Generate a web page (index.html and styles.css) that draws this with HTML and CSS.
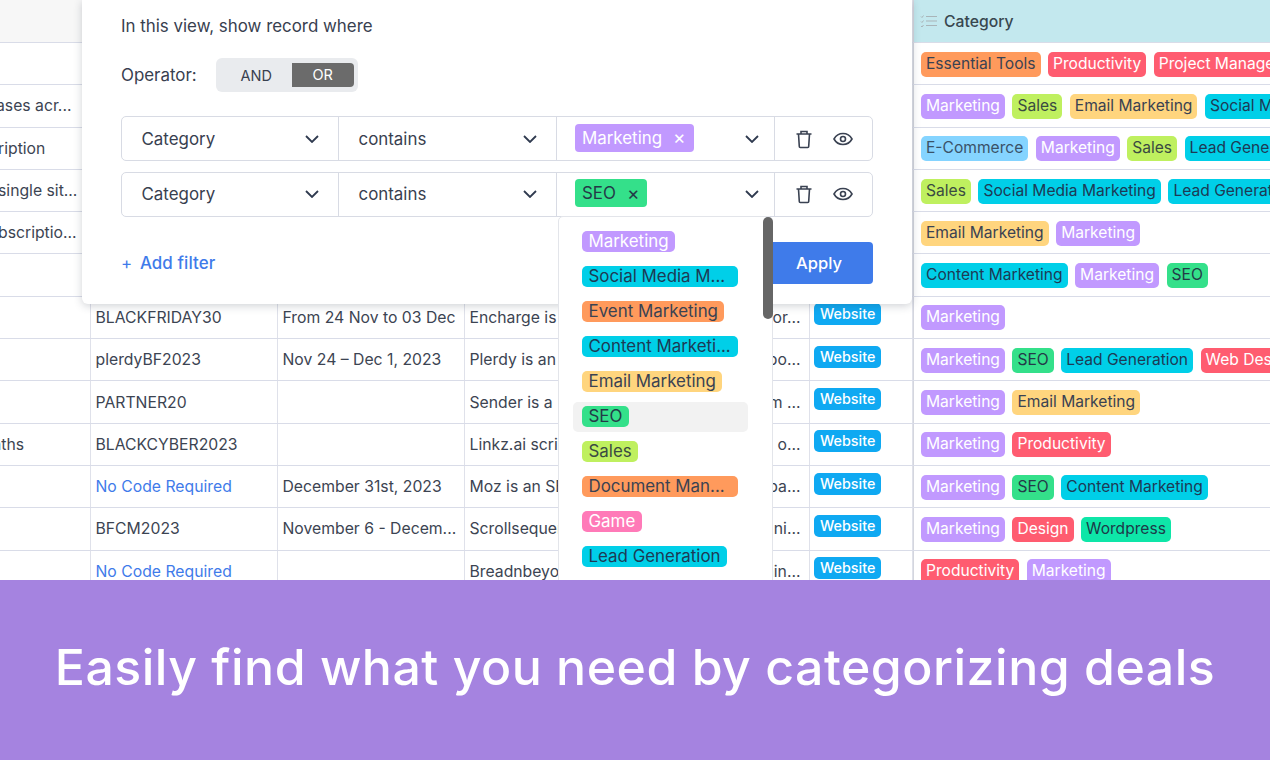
FILE: index.html
```html
<!DOCTYPE html>
<html lang="en">
<head>
    <meta charset="UTF-8">
    <title>Deals</title>
    <link rel="stylesheet" href="styles.css">
</head>
<body>
    <div class="screen">
        <div class="table">
            <div class="row head">
                <div class="cell"></div><div class="cell"></div><div class="cell"></div><div class="cell"></div><div class="cell"></div>
                <div class="cell cat-head">
                    <svg class="list-icon" viewBox="0 0 18 14" width="18" height="14"><path d="M1 2.5l1 1 1.5-2M1 7.5l1 1 1.5-2M1 12l1 1 1.5-2" fill="none" stroke="#a9b4b8" stroke-width="1"/><path d="M6 2.5h11M6 7h11M6 11.5h11" fill="none" stroke="#a9b4b8" stroke-width="1.2"/></svg>
                    Category
                </div>
            </div>
            <div class="row">
                <div class="cell first"></div><div class="cell"></div><div class="cell"></div><div class="cell"></div><div class="cell"></div>
                <div class="cell tags"><span class="tag orange">Essential Tools</span><span class="tag red">Productivity</span><span class="tag red">Project Management</span></div>
            </div>
            <div class="row">
                <div class="cell first shift-sm">ases acr...</div><div class="cell"></div><div class="cell"></div><div class="cell"></div><div class="cell"></div>
                <div class="cell tags"><span class="tag purple">Marketing</span><span class="tag lime">Sales</span><span class="tag yellow">Email Marketing</span><span class="tag cyan">Social Media</span></div>
            </div>
            <div class="row">
                <div class="cell first">ription</div><div class="cell"></div><div class="cell"></div><div class="cell"></div><div class="cell"></div>
                <div class="cell tags"><span class="tag sky">E-Commerce</span><span class="tag purple">Marketing</span><span class="tag lime">Sales</span><span class="tag cyan">Lead Generation</span></div>
            </div>
            <div class="row">
                <div class="cell first">single sit...</div><div class="cell"></div><div class="cell"></div><div class="cell"></div><div class="cell"></div>
                <div class="cell tags"><span class="tag lime">Sales</span><span class="tag cyan">Social Media Marketing</span><span class="tag cyan">Lead Generation</span></div>
            </div>
            <div class="row">
                <div class="cell first">bscriptio...</div><div class="cell"></div><div class="cell"></div><div class="cell"></div><div class="cell"></div>
                <div class="cell tags"><span class="tag yellow">Email Marketing</span><span class="tag purple">Marketing</span></div>
            </div>
            <div class="row">
                <div class="cell first"></div><div class="cell"></div><div class="cell"></div><div class="cell"></div><div class="cell"></div>
                <div class="cell tags"><span class="tag cyan">Content Marketing</span><span class="tag purple">Marketing</span><span class="tag green">SEO</span></div>
            </div>
            <div class="row">
                <div class="cell first"></div><div class="cell">BLACKFRIDAY30</div><div class="cell">From 24 Nov to 03 Dec</div>
                <div class="cell split"><span>Encharge is</span><span>for...</span></div>
                <div class="cell site"><span class="web">Website</span></div>
                <div class="cell tags"><span class="tag purple">Marketing</span></div>
            </div>
            <div class="row">
                <div class="cell first"></div><div class="cell">plerdyBF2023</div><div class="cell">Nov 24 – Dec 1, 2023</div>
                <div class="cell split"><span>Plerdy is an</span><span>bo...</span></div>
                <div class="cell site"><span class="web">Website</span></div>
                <div class="cell tags"><span class="tag purple">Marketing</span><span class="tag green">SEO</span><span class="tag cyan">Lead Generation</span><span class="tag red">Web Design</span></div>
            </div>
            <div class="row">
                <div class="cell first"></div><div class="cell">PARTNER20</div><div class="cell"></div>
                <div class="cell split"><span>Sender is a</span><span>m ...</span></div>
                <div class="cell site"><span class="web">Website</span></div>
                <div class="cell tags"><span class="tag purple">Marketing</span><span class="tag yellow">Email Marketing</span></div>
            </div>
            <div class="row">
                <div class="cell first shift-lg">nths</div><div class="cell">BLACKCYBER2023</div><div class="cell"></div>
                <div class="cell split"><span>Linkz.ai scri</span><span>o...</span></div>
                <div class="cell site"><span class="web">Website</span></div>
                <div class="cell tags"><span class="tag purple">Marketing</span><span class="tag red">Productivity</span></div>
            </div>
            <div class="row">
                <div class="cell first"></div><div class="cell link">No Code Required</div><div class="cell">December 31st, 2023</div>
                <div class="cell split"><span>Moz is an SEO</span><span>pa...</span></div>
                <div class="cell site"><span class="web">Website</span></div>
                <div class="cell tags"><span class="tag purple">Marketing</span><span class="tag green">SEO</span><span class="tag cyan">Content Marketing</span></div>
            </div>
            <div class="row">
                <div class="cell first"></div><div class="cell">BFCM2023</div><div class="cell">November 6 - Decem...</div>
                <div class="cell split"><span>Scrollsequence</span><span>ni...</span></div>
                <div class="cell site"><span class="web">Website</span></div>
                <div class="cell tags"><span class="tag purple">Marketing</span><span class="tag red">Design</span><span class="tag mint">Wordpress</span></div>
            </div>
            <div class="row">
                <div class="cell first"></div><div class="cell link">No Code Required</div><div class="cell"></div>
                <div class="cell split"><span>Breadnbeyond</span><span>ain...</span></div>
                <div class="cell site"><span class="web">Website</span></div>
                <div class="cell tags"><span class="tag red">Productivity</span><span class="tag purple">Marketing</span></div>
            </div>

            <div class="modal">
                <p class="modal-title">In this view, show record where</p>
                <div class="operator">
                    <span>Operator:</span>
                    <div class="switch"><span class="switch-item">AND</span><span class="switch-item on">OR</span></div>
                </div>
                <div class="filter">
                    <div class="fcell">Category<svg class="chev" viewBox="0 0 14 8" width="14" height="8"><path d="M1 1l6 6 6-6"/></svg></div>
                    <div class="fcell">contains<svg class="chev" viewBox="0 0 14 8" width="14" height="8"><path d="M1 1l6 6 6-6"/></svg></div>
                    <div class="fcell value"><span class="chip purple">Marketing<i>×</i></span><svg class="chev" viewBox="0 0 14 8" width="14" height="8"><path d="M1 1l6 6 6-6"/></svg></div>
                    <div class="actions">
                        <svg viewBox="0 0 18 20" width="18" height="20"><path d="M1.5 5h15M6 5V2.5h6V5M3.5 5l.8 12.5a1 1 0 0 0 1 1h7.4a1 1 0 0 0 1-1L14.500 5" class="ico"/></svg>
                        <svg viewBox="0 0 20 14" width="20" height="14"><path d="M1 7c2-3.600 5-5.500 9-5.500S17 3.400 19 7c-2 3.600-5 5.500-9 5.500S3 10.600 1 7z" class="ico"/><circle cx="10" cy="7" r="2.500" class="ico"/></svg>
                    </div>
                </div>
                <div class="filter">
                    <div class="fcell">Category<svg class="chev" viewBox="0 0 14 8" width="14" height="8"><path d="M1 1l6 6 6-6"/></svg></div>
                    <div class="fcell">contains<svg class="chev" viewBox="0 0 14 8" width="14" height="8"><path d="M1 1l6 6 6-6"/></svg></div>
                    <div class="fcell value"><span class="chip green">SEO<i>×</i></span><svg class="chev" viewBox="0 0 14 8" width="14" height="8"><path d="M1 1l6 6 6-6"/></svg></div>
                    <div class="actions">
                        <svg viewBox="0 0 18 20" width="18" height="20"><path d="M1.5 5h15M6 5V2.500h6V5M3.500 5l.8 12.500a1 1 0 0 0 1 1h7.400a1 1 0 0 0 1-1L14.500 5" class="ico"/></svg>
                        <svg viewBox="0 0 20 14" width="20" height="14"><path d="M1 7c2-3.600 5-5.500 9-5.500S17 3.400 19 7c-2 3.600-5 5.500-9 5.500S3 10.600 1 7z" class="ico"/><circle cx="10" cy="7" r="2.500" class="ico"/></svg>
                    </div>
                </div>
                <div class="modal-foot">
                    <span class="add"><b>+</b> Add filter</span>
                    <button class="apply">Apply</button>
                </div>
            </div>

            <div class="dropdown">
                <div class="scroll"></div>
                <div class="opt"><span class="dtag purple">Marketing</span></div>
                <div class="opt"><span class="dtag cyan wide">Social Media M...</span></div>
                <div class="opt"><span class="dtag orange">Event Marketing</span></div>
                <div class="opt"><span class="dtag cyan wide">Content Marketi...</span></div>
                <div class="opt"><span class="dtag yellow">Email Marketing</span></div>
                <div class="opt hover"><span class="dtag green">SEO</span></div>
                <div class="opt"><span class="dtag lime">Sales</span></div>
                <div class="opt"><span class="dtag orange wide">Document Man...</span></div>
                <div class="opt"><span class="dtag pink">Game</span></div>
                <div class="opt"><span class="dtag cyan">Lead Generation</span></div>
            </div>
        </div>
        <div class="banner">Easily find what you need by categorizing deals</div>
    </div>
</body>
</html>
```

FILE: styles.css
```css
* {
    box-sizing: border-box;
}

body {
    margin: 0;
    font-family: Inter, 'Liberation Sans', sans-serif;
    color: #3c4452;
    background-color: #fff;
}

.screen {
    width: 1270px;
    height: 760px;
    overflow: hidden;
}

.table {
    position: relative;
    height: 580px;
    overflow: hidden;
    font-size: 15.75px;
}

.row {
    display: grid;
    grid-template-columns: 90.5px 187px 187px 345px 103.5px 1fr;
    height: 42.3px;
    border-bottom: 1.5px solid #d9dce8;
}

.head {
    height: 43px;
    background-color: #f7f7f7;
}

.cell {
    display: flex;
    align-items: center;
    padding: 0 5px;
    white-space: nowrap;
    overflow: hidden;
    border-right: 1.5px solid #dfe1ea;
}

.cell.first {
    padding: 0;
    text-indent: -2px;
}

.cell.shift-sm {
    text-indent: -4px;
}

.cell.shift-lg {
    text-indent: -8px;
}

.cell:last-child {
    border-right: none;
    border-left: 1px solid #d4d6de;
}

.cat-head {
    gap: 6px;
    padding-left: 6px;
    background-color: #c3e8ee;
    font-weight: 500;
    color: #38474f;
}

.link {
    color: #3f7bea;
}

.split {
    justify-content: space-between;
    padding-right: 8px;
}

.site {
    padding: 0 0 6px 4.5px;
}

.web {
    height: 22px;
    line-height: 21px;
    padding: 0 6px;
    border-radius: 5px;
    font-size: 14.3px;
    font-weight: 500;
    color: #fff;
    background-color: #0fa9f2;
}

.tags {
    gap: 7.5px;
    padding: 1px 0 0 7px;
}

.tag {
    height: 25px;
    line-height: 24px;
    padding: 0 5px;
    border-radius: 5px;
    flex-shrink: 0;
    font-size: 15.6px;
}

.purple { background-color: #c199ff; color: #fff; }
.red { background-color: #ff5c70; color: #fff; }
.pink { background-color: #ff7ab8; color: #fff; }
.orange { background-color: #ff9a5c; color: #3a4252; }
.cyan { background-color: #00cfe8; color: #1d3a55; }
.yellow { background-color: #ffd57e; color: #3a4252; }
.green { background-color: #34e08a; color: #243a48; }
.lime { background-color: #bff05f; color: #3a4a42; }
.sky { background-color: #85d4ff; color: #3a5268; }
.mint { background-color: #0ee6a8; color: #1d3a48; }

.modal {
    position: absolute;
    top: 0;
    left: 82px;
    width: 830px;
    height: 304px;
    padding: 0 39px;
    background-color: #fff;
    border-radius: 0 0 6px 6px;
    box-shadow: 0 2px 8px rgba(40, 50, 70, 0.22);
    font-size: 16.9px;
    color: #38404f;
}

.modal-title {
    margin: 0;
    height: 52px;
    line-height: 52px;
}

.operator {
    display: flex;
    align-items: center;
    gap: 19px;
    height: 46px;
    margin-bottom: 18px;
}

.switch {
    display: flex;
    align-items: center;
    width: 142px;
    height: 34px;
    padding: 0 4px 0 5px;
    border-radius: 6px;
    background-color: #e9ebee;
    font-size: 14.5px;
}

.switch-item {
    width: 71px;
    text-align: center;
}

.switch-item.on {
    width: 62px;
    height: 24px;
    line-height: 24px;
    border-radius: 0 4px 4px 0;
    background-color: #6b6b6b;
    color: #fff;
}

.filter {
    display: grid;
    grid-template-columns: 217px 218px 218px 1fr;
    height: 45px;
    margin-bottom: 10.5px;
    border: 1.5px solid #d8dbe4;
    border-radius: 5px;
}

.fcell {
    display: flex;
    align-items: center;
    justify-content: space-between;
    padding: 0 19px 0 19.5px;
    border-right: 1.5px solid #d8dbe4;
}

.fcell.value {
    padding: 0 15px 0 18px;
}

.chev {
    fill: none;
    stroke: #2f3a4f;
    stroke-width: 1.8;
}

.chip {
    display: flex;
    align-items: center;
    height: 28px;
    padding: 0 8px 0 7px;
    border-radius: 4px;
    margin-top: -2px;
}

.chip i {
    margin-left: 11px;
    font-style: normal;
    font-size: 19px;
    line-height: 1;
}

.actions {
    display: flex;
    align-items: center;
    gap: 20px;
    padding-left: 20px;
}

.ico {
    fill: none;
    stroke: #3a4252;
    stroke-width: 1.6;
}

.modal-foot {
    display: flex;
    align-items: center;
    justify-content: space-between;
    margin-top: 25.5px;
}

.add {
    color: #3f7bea;
    font-weight: 500;
    letter-spacing: 0.1px;
}

.add b {
    font-weight: 400;
    margin-right: 3px;
}

.apply {
    width: 104px;
    height: 42px;
    padding: 0 4px 0 0;
    border: none;
    border-radius: 4px;
    background-color: #3f7bea;
    color: #fff;
    font-family: inherit;
    font-size: 16.5px;
    font-weight: 500;
}

.dropdown {
    position: absolute;
    top: 216px;
    left: 558px;
    width: 215px;
    height: 380px;
    padding: 9.5px 24px 0 14px;
    background-color: #fff;
    border: 1px solid #e3e5ea;
    border-radius: 5px;
    font-size: 16.9px;
}

.scroll {
    position: absolute;
    top: 0;
    right: -1px;
    width: 10px;
    height: 102px;
    border-radius: 5px;
    background-color: #666;
}

.opt {
    display: flex;
    align-items: center;
    height: 30px;
    margin-bottom: 5px;
    padding-left: 9px;
    border-radius: 5px;
}

.opt.hover {
    background-color: #f2f2f2;
}

.dtag {
    height: 21px;
    line-height: 20px;
    padding: 0 6.5px;
    border-radius: 5px;
    white-space: nowrap;
}

.dtag.wide {
    width: 156px;
}

.banner {
    display: flex;
    align-items: center;
    justify-content: center;
    height: 180px;
    padding-bottom: 6px;
    background-color: #a583e0;
    color: #fff;
    font-size: 50px;
    font-weight: 500;
    letter-spacing: 0.5px;
}
```
